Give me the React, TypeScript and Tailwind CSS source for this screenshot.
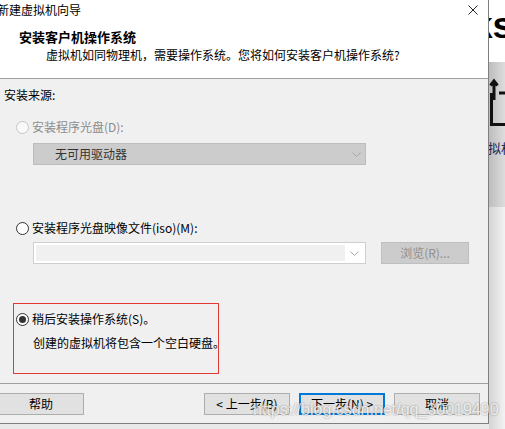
const font = "[font-family:'Noto_Sans_CJK_SC','Microsoft_YaHei',sans-serif]";

function Radio({ state }: { state: 'disabled' | 'off' | 'on' }) {
  if (state === 'disabled')
    return <span className="w-[13px] h-[13px] rounded-full border border-[#c6c6c6] bg-[#f9f9f9] shrink-0" />;
  return (
    <span className="w-[13px] h-[13px] rounded-full border border-[#333333] bg-white shrink-0 flex items-center justify-center">
      {state === 'on' && <span className="w-[7px] h-[7px] rounded-full bg-[#333333]" />}
    </span>
  );
}

function Chevron() {
  return (
    <svg width="9" height="5" viewBox="0 0 9 5">
      <path d="M0.5 0.5 L4.5 4.5 L8.5 0.5" fill="none" stroke="#a8a8a8" />
    </svg>
  );
}

function Button({ label, primary, className = '' }: { label: string; primary?: boolean; className?: string }) {
  return (
    <div
      className={
        'w-[86px] h-[22px] flex items-center justify-center bg-[#e1e1e1] text-[12px] leading-[16px] text-black whitespace-nowrap ' +
        (primary ? 'border-2 border-[#0078d7] ' : 'border border-[#adadad] ') +
        className
      }
    >
      {label}
    </div>
  );
}

function RightStrip() {
  return (
    <div className="flex-1 h-[429px] flex flex-col overflow-hidden">
      <div className="h-[62px] bg-white overflow-hidden">
        <div className="ml-[-17px] mt-[4px] text-[37px] leading-[44px] font-bold text-black whitespace-nowrap [font-family:'Liberation_Sans',sans-serif]">
          ks
        </div>
      </div>
      <div className="h-[145px] bg-gradient-to-r from-[#bdbdbd] to-[#dddddd] flex flex-col">
        <svg width="16" height="50" viewBox="0 0 16 50" className="mt-[16px]">
          <path d="M5 22 V3 M1.5 7.5 L5 3 L8.5 7.5" fill="none" stroke="#111" strokeWidth="3" />
          <path d="M2.5 15 V46.5 H16 M10 15 H16" fill="none" stroke="#111" strokeWidth="3" />
        </svg>
        <div className={'ml-[-1px] mt-[12px] text-[13px] leading-[16px] text-[#23234a] whitespace-nowrap ' + font}>拟机</div>
      </div>
      <div className="flex-1 bg-gradient-to-r from-[#d4d4d4] to-[#f3f3f3]" />
    </div>
  );
}

export default function App() {
  return (
    <div className={'w-[505px] h-[429px] flex relative overflow-hidden bg-[#e9e9e9] ' + font}>
      <div className="w-[489px] h-[424px] shrink-0 flex flex-col bg-[#f0f0f0] border-r border-b border-[#7f7f7f]">
        {/* header */}
        <div className="h-[78px] bg-white flex flex-col">
          <div className="h-[19px] flex items-center justify-between">
            <span className="ml-[-3px] text-[12px] leading-[16px] text-black">新建虚拟机向导</span>
            <svg width="10" height="10" viewBox="0 0 10 10" className="mr-[10px]">
              <path d="M0.5 0.5 L9.5 9.5 M9.5 0.5 L0.5 9.5" stroke="#222" strokeWidth="1" />
            </svg>
          </div>
          <div className="ml-[19px] mt-[10px] text-[13px] leading-[16px] font-bold text-black">安装客户机操作系统</div>
          <div className="ml-[46px] mt-[2px] text-[12px] leading-[16px] text-black">
            虚拟机如同物理机，需要操作系统。您将如何安装客户机操作系统?
          </div>
        </div>
        <div className="h-px bg-[#a0a0a0]" />

        {/* body */}
        <div className="flex flex-col text-[12px] leading-[16px] text-black">
          <div className="ml-[4px] mt-[8px]">安装来源:</div>

          <div className="ml-[16px] mt-[16px] flex items-center gap-[3px]">
            <Radio state="disabled" />
            <span className="text-[#8c8c8c]">安装程序光盘(D):</span>
          </div>
          <div className="ml-[33px] mt-[8px] w-[333px] h-[22px] bg-[#cccccc] border border-[#bdbdbd] flex items-center justify-between pl-[21px] pr-[4px]">
            <span className="text-[#333333]">无可用驱动器</span>
            <Chevron />
          </div>

          <div className="ml-[16px] mt-[55px] flex items-center gap-[3px]">
            <Radio state="off" />
            <span>安装程序光盘映像文件(iso)(M):</span>
          </div>
          <div className="mt-[6px] flex items-center">
            <div className="ml-[33px] w-[333px] h-[22px] bg-white border border-[#cfcfcf] p-[2px] flex">
              <div className="flex-1 bg-[#f0f0f0]" />
              <div className="w-[18px] flex items-center justify-center">
                <Chevron />
              </div>
            </div>
            <div className="ml-[15px] w-[88px] h-[22px] bg-[#cccccc] border border-[#bfbfbf] flex items-center justify-center text-[#8f8f8f]">
              浏览(R)...
            </div>
          </div>

          <div className="ml-[13px] mt-[39px] w-[206px] h-[71px] border border-[#e53935] flex flex-col pt-[7px]">
            <div className="ml-[2px] flex items-center gap-[3px]">
              <Radio state="on" />
              <span>稍后安装操作系统(S)。</span>
            </div>
            <div className="ml-[19px] mt-[8px] whitespace-nowrap">创建的虚拟机将包含一个空白硬盘。</div>
          </div>
        </div>

        {/* footer */}
        <div className="mt-[9px] h-px bg-[#a0a0a0]" />
        <div className="mt-[9px] flex items-center">
          <Button label="帮助" className="ml-[-2px]" />
          <Button label="< 上一步(B)" className="ml-[120px]" />
          <Button label="下一步(N) >" primary className="ml-[9px]" />
          <Button label="取消" className="ml-[9px]" />
        </div>
      </div>

      <RightStrip />

      {/* csdn watermark over the footer */}
      <div className="absolute left-[253px] top-[400px] text-[16px] leading-[20px] text-white/80 whitespace-nowrap [font-family:'Liberation_Sans',sans-serif] [text-shadow:0_0_2px_rgba(0,0,0,0.45)] pointer-events-none">
        https://blog.csdn.net/qq_30019490
      </div>
    </div>
  );
}
